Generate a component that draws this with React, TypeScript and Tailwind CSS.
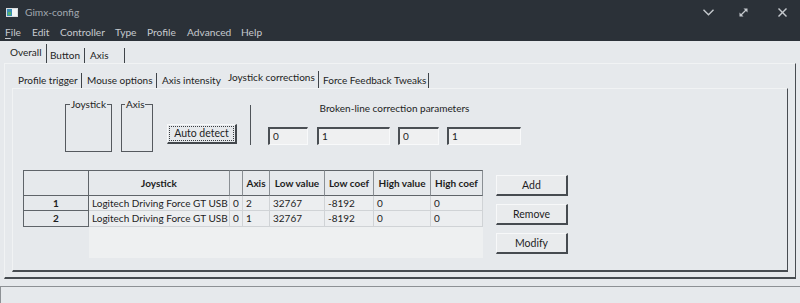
import React from "react";

const rows = [
  { n: "1", joy: "Logitech Driving Force GT USB", id: "0", axis: "2", lv: "32767", lc: "-8192", hv: "0", hc: "0", h: "h-[15px]" },
  { n: "2", joy: "Logitech Driving Force GT USB", id: "0", axis: "1", lv: "32767", lc: "-8192", hv: "0", hc: "0", h: "h-[16px]" },
];

function Btn({ label }: { label: string }) {
  return (
    <div className="w-[72px] h-[21px] bg-[#e9ebed] border-t border-l border-t-[#f7f8f9] border-l-[#f7f8f9] border-r-2 border-b-2 border-r-[#464b50] border-b-[#464b50] flex items-center justify-center text-[10.5px]">
      {label}
    </div>
  );
}

function Input({ w, v }: { w: string; v: string }) {
  return (
    <div className={`${w} h-[18px] bg-[#eff0f1] border-t-2 border-l-2 border-t-[#4a4f54] border-l-[#4a4f54] border-r border-b border-r-[#f8f9fa] border-b-[#f8f9fa] flex items-center pl-[3px]`}>
      {v}
    </div>
  );
}

export default function App() {
  return (
    <div className="w-[800px] h-[303px] overflow-hidden bg-[#e6e9ec] flex flex-col text-[10px] leading-[13px] whitespace-nowrap text-[#1d1d1d] font-[family-name:Lato,sans-serif]">
      {/* title bar */}
      <div className="h-[24px] bg-[#2b3138] flex items-center shrink-0">
        <svg className="ml-[6px]" width="12" height="9" viewBox="0 0 12 9">
          <rect x="0" y="0" width="12" height="9" fill="#d9dde0" />
          <rect x="1" y="1" width="5" height="7" fill="#3b8db4" />
          <rect x="2" y="4" width="3" height="3" fill="#55b36a" />
          <rect x="6" y="1" width="5" height="7" fill="#f2f4f5" />
        </svg>
        <span className="ml-[7px] text-[#a2a9b0] text-[10.2px]">Gimx-config</span>
        <div className="ml-auto flex items-center">
          <svg width="11" height="7" viewBox="0 0 11 7">
            <polyline points="0.5,0.8 5.5,5.8 10.5,0.8" fill="none" stroke="#c5c9cd" strokeWidth="1.4" />
          </svg>
          <svg className="ml-[25px]" width="9" height="9" viewBox="0 0 9 9">
            <line x1="1.5" y1="7.5" x2="7.5" y2="1.5" stroke="#c5c9cd" strokeWidth="1.3" />
            <polygon points="4.5,0.5 8.5,0.5 8.5,4.5" fill="#c5c9cd" />
            <polygon points="0.5,4.5 0.5,8.5 4.5,8.5" fill="#c5c9cd" />
          </svg>
          <svg className="ml-[30px] mr-[13px]" width="9" height="9" viewBox="0 0 9 9">
            <line x1="0.5" y1="0.5" x2="8.5" y2="8.5" stroke="#c5c9cd" strokeWidth="1.4" />
            <line x1="8.5" y1="0.5" x2="0.5" y2="8.5" stroke="#c5c9cd" strokeWidth="1.4" />
          </svg>
        </div>
      </div>
      {/* menu bar */}
      <div className="h-[17px] bg-[#2b3138] flex items-center text-[#c6cacf] shrink-0 pl-[5px] text-[10.2px]">
        <span className="w-[27px]"><span className="underline underline-offset-2">F</span>ile</span>
        <span className="w-[28px]">Edit</span>
        <span className="w-[55px]">Controller</span>
        <span className="w-[32px]">Type</span>
        <span className="w-[40px]">Profile</span>
        <span className="w-[54px]">Advanced</span>
        <span>Help</span>
      </div>
      {/* top tabs */}
      <div className="h-[22px] flex items-end pl-[5px] shrink-0">
        <div className="w-[42px] h-[19px] pl-[5px] pb-[2px] flex items-center border-r border-r-[#3f4449]">Overall</div>
        <div className="w-[38px] h-[15px] pl-[3px] flex items-center border-r border-r-[#3f4449]">Button</div>
        <div className="w-[40px] h-[15px] pl-[5px] flex items-center border-r border-r-[#3f4449]">Axis</div>
      </div>
      {/* outer notebook pane */}
      <div className="ml-[4px] w-[792px] h-[216px] shrink-0 flex flex-col border-t border-l border-t-[#f1f3f4] border-l-[#f1f3f4] border-r border-r-[#474c51] border-b-2 border-b-[#474c51]">
        {/* sub tabs */}
        <div className="h-[24px] flex items-end pl-[8px] shrink-0">
          <div className="w-[69px] h-[15px] pl-[5px] pb-[1px] flex items-center border-r border-r-[#3f4449]">Profile trigger</div>
          <div className="w-[75px] h-[15px] pl-[5px] pb-[1px] flex items-center border-r border-r-[#3f4449]">Mouse options</div>
          <div className="w-[65px] h-[15px] pl-[5px] pb-[1px] flex items-center">Axis intensity</div>
          <div className="w-[97px] h-[17px] pl-[6px] pb-[4px] flex items-center border-r border-r-[#3f4449]">Joystick corrections</div>
          <div className="w-[110px] h-[15px] pl-[4px] pb-[1px] flex items-center border-r border-r-[#3f4449]">Force Feedback Tweaks</div>
        </div>
        {/* inner pane */}
        <div className="ml-[7px] w-[776px] h-[184px] shrink-0 flex flex-col border-t border-l border-t-[#f1f3f4] border-l-[#f1f3f4] border-r border-r-[#474c51] border-b-2 border-b-[#474c51]">
          {/* top controls */}
          <div className="mt-[15px] flex items-start">
            <div className="ml-[52px] w-[47px] h-[48px] border border-[#55595e]">
              <div className="-mt-[7px] ml-[4px] px-[1px] w-fit bg-[#e6e9ec]">Joystick</div>
            </div>
            <div className="ml-[9px] w-[32px] h-[48px] border border-[#55595e]">
              <div className="-mt-[7px] ml-[3px] px-[1px] w-fit bg-[#e6e9ec]">Axis</div>
            </div>
            <div className="ml-[14px] mt-[20px] w-[70px] h-[20px] bg-[#e6e9ec] border-t border-l border-t-[#f7f8f9] border-l-[#f7f8f9] border-r-2 border-b-2 border-r-[#43484d] border-b-[#43484d] p-[1px]">
              <div className="w-full h-full border border-dotted border-[#3a3e42] flex items-center justify-center text-[10.5px]">Auto detect</div>
            </div>
            <div className="ml-[13px] mt-[1px] w-px h-[40px] bg-[#4f5459]" />
            <div className="ml-[17px] w-[253px] -mt-[2px] flex flex-col">
              <div className="text-center">Broken-line correction parameters</div>
              <div className="mt-[12px] flex">
                <Input w="w-[41px]" v="0" />
                <div className="ml-[9px]"><Input w="w-[73px]" v="1" /></div>
                <div className="ml-[8px]"><Input w="w-[41px]" v="0" /></div>
                <div className="ml-[8px]"><Input w="w-[74px]" v="1" /></div>
              </div>
            </div>
          </div>
          {/* table + buttons */}
          <div className="mt-[18px] flex items-start">
            <div className="ml-[10px] grid grid-cols-[66px_141px_13px_27px_55px_49px_57px_52px]">
              <div className="h-[26px] border-t border-l border-r border-b border-[#5f6469]" />
              {["Joystick", "", "Axis", "Low value", "Low coef", "High value", "High coef"].map((t, i) => (
                <div key={i} className="h-[26px] border-t border-r border-b border-t-[#5f6469] border-b-[#5f6469] border-r-[#8a8f94] flex items-center justify-center font-bold">
                  {t}
                </div>
              ))}
              {rows.map((r) => (
                <React.Fragment key={r.n}>
                  <div className={`${r.h} border-l border-r border-b border-[#5f6469] flex items-center justify-center font-bold`}>{r.n}</div>
                  {[r.joy, r.id, r.axis, r.lv, r.lc, r.hv, r.hc].map((v, i) => (
                    <div key={i} className={`${r.h} bg-[#eceef0] border-r border-b border-[#d0d3d6] flex items-center pl-[3px] overflow-hidden`}>
                      {v}
                    </div>
                  ))}
                </React.Fragment>
              ))}
              <div className="h-[31px]" />
              <div className="col-span-7 h-[31px] bg-[#eef0f1]" />
            </div>
            <div className="ml-[13px] mt-[5px] flex flex-col gap-[8px]">
              <Btn label="Add" />
              <Btn label="Remove" />
              <Btn label="Modify" />
            </div>
          </div>
        </div>
      </div>
      {/* status bar */}
      <div className="mt-[7px] flex-1 border-t border-l border-[#8d9195]" />
    </div>
  );
}
